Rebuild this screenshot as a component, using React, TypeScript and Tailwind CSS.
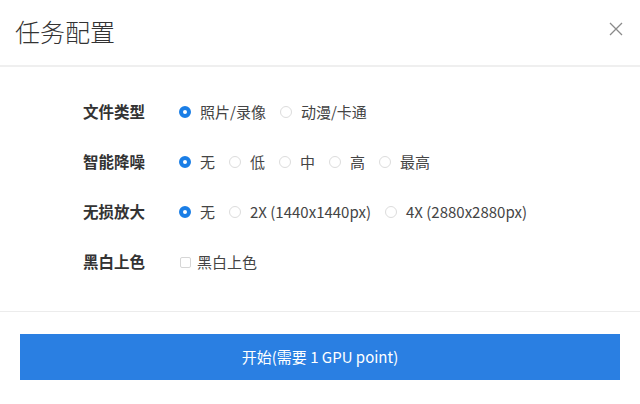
const font = { fontFamily: '"Noto Sans CJK SC", "Noto Sans", sans-serif' }

type Row = { label: string; kind: "radio" | "check"; options: string[]; selected?: number }

const rows: Row[] = [
  { label: "文件类型", kind: "radio", options: ["照片/录像", "动漫/卡通"], selected: 0 },
  { label: "智能降噪", kind: "radio", options: ["无", "低", "中", "高", "最高"], selected: 0 },
  { label: "无损放大", kind: "radio", options: ["无", "2X (1440x1440px)", "4X (2880x2880px)"], selected: 0 },
  { label: "黑白上色", kind: "check", options: ["黑白上色"] },
]

const Radio = ({ on }: { on: boolean }) =>
  on ? (
    <span className="w-[12px] h-[12px] rounded-full border-[4px] border-[#1a7ee6] bg-white shrink-0" />
  ) : (
    <span className="w-[12px] h-[12px] rounded-full border border-[#dcdcdc] bg-white shrink-0" />
  )

const App = () => {
  return (
    <div className="w-[640px] h-[404px] bg-white flex flex-col" style={font}>
      <div className="h-[67px] shrink-0 flex items-center justify-between pl-[15px] pr-[17px] border-b-2 border-[#efefef]">
        <span className="text-[25px] font-light text-[#333] leading-none -mt-[2px]">任务配置</span>
        <svg width="14" height="14" viewBox="0 0 14 14" className="-mt-[7px]">
          <path d="M1 1L13 13M13 1L1 13" stroke="#8a8a8a" strokeWidth="1.3" />
        </svg>
      </div>
      <div className="pt-[20px] pb-[24px] pl-[83px] border-b border-[#ececec] shrink-0">
        {rows.map((r) => (
          <div key={r.label} className="h-[50px] flex items-center">
            <span className="w-[96px] shrink-0 text-[15.5px] font-bold text-[#333]">{r.label}</span>
            <div className="flex items-center gap-[14px] text-[15px] text-[#444]">
              {r.options.map((o, i) => (
                <label key={o} className="flex items-center gap-[9px]">
                  {r.kind === "radio" ? (
                    <Radio on={i === r.selected} />
                  ) : (
                    <span className="w-[11px] h-[11px] rounded-[2px] border border-[#d6d6d6] bg-white shrink-0 ml-[1px] -mr-[3px]" />
                  )}
                  <span>{o}</span>
                </label>
              ))}
            </div>
          </div>
        ))}
      </div>
      <div className="px-[20px] pt-[22px]">
        <button className="w-full h-[46px] bg-[#2a7fe2] text-white text-[15px] flex items-center justify-center">
          开始(需要 1 GPU point)
        </button>
      </div>
    </div>
  )
}

export default App
